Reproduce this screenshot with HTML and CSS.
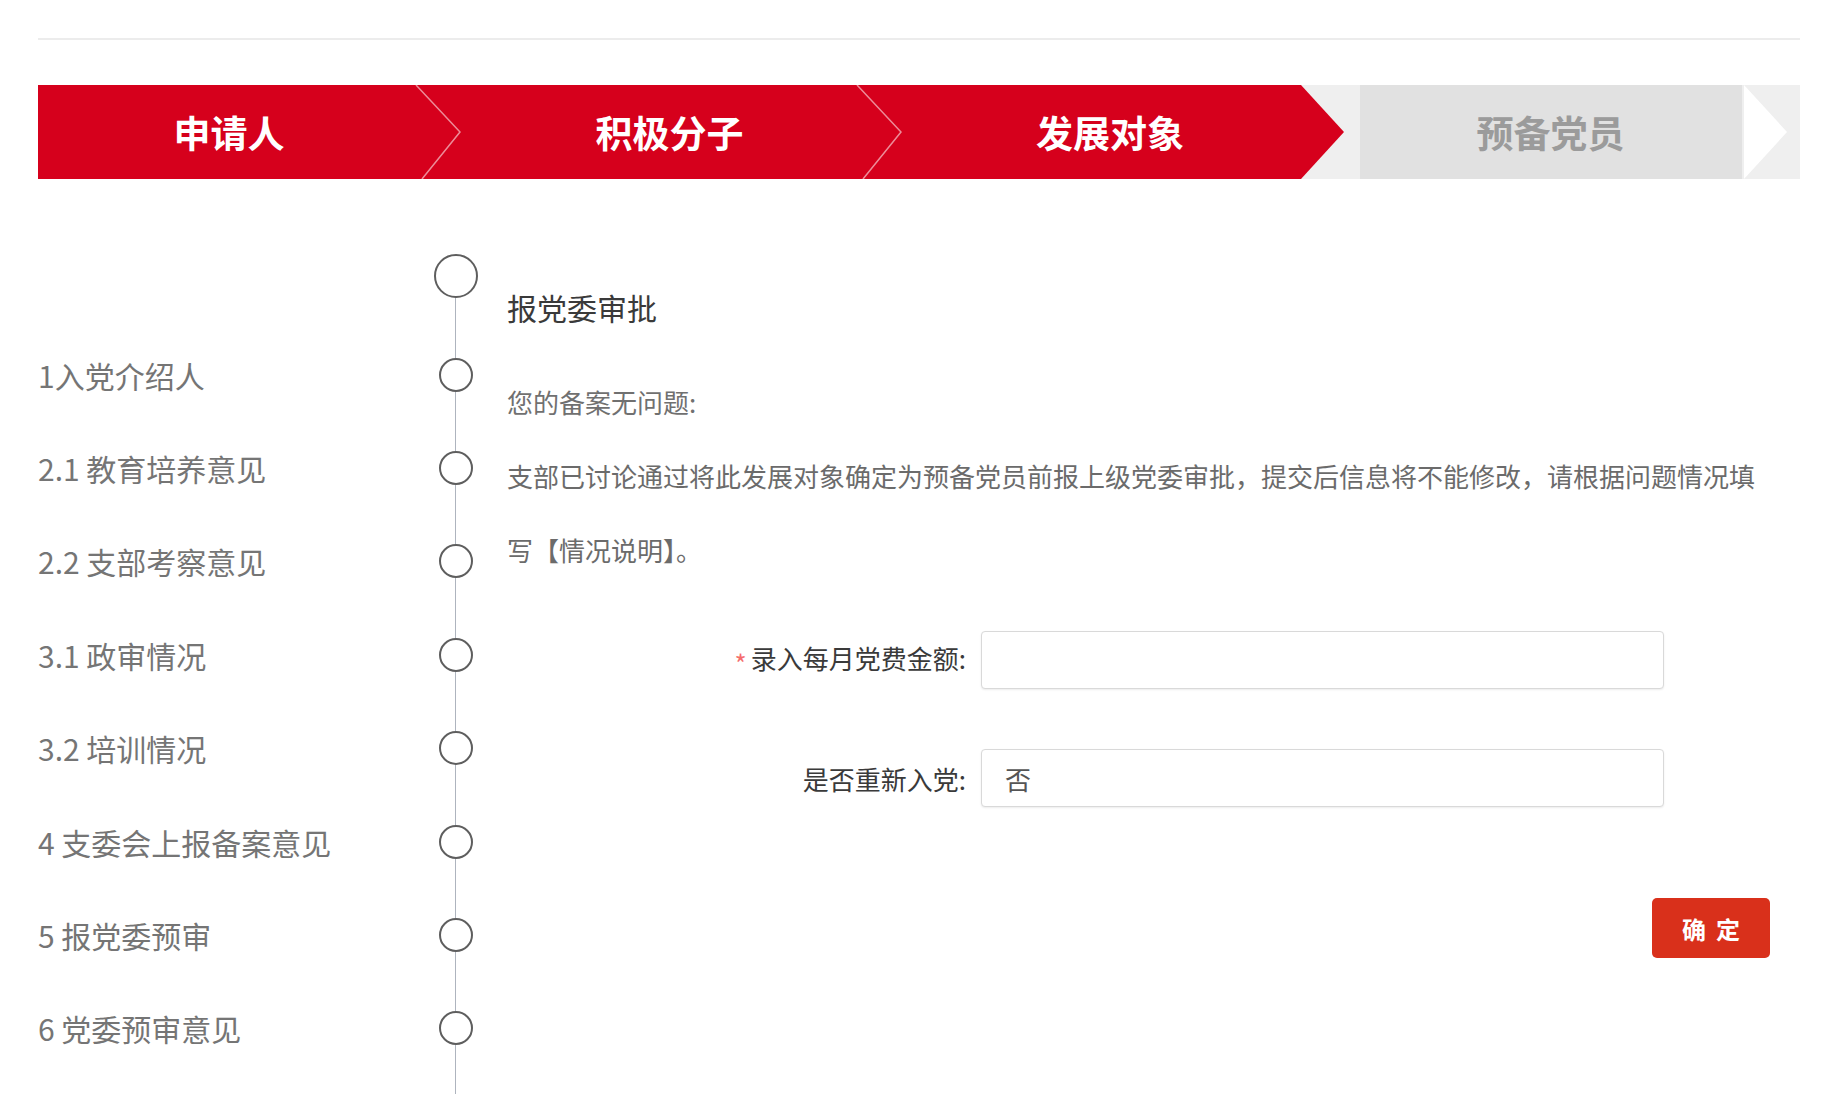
FILE: index.html
```html
<!DOCTYPE html>
<html>

<head>
  <meta charset="utf-8">
  <title>报党委审批</title>
  <link rel="stylesheet" href="styles.css">
</head>

<body>
  <div class="page">
    <div class="divider"></div>

    <!-- progress steps -->
    <div class="steps">
      <div class="step done">
        <span class="step-name">申请人</span>
        <svg class="step-arrow" viewBox="0 0 46 94"><polyline points="-4,0 40,47 2,94"></polyline></svg>
      </div>
      <div class="step done">
        <span class="step-name">积极分子</span>
        <svg class="step-arrow" viewBox="0 0 46 94"><polyline points="-4,0 40,47 2,94"></polyline></svg>
      </div>
      <div class="step current">
        <span class="step-name">发展对象</span>
        <svg class="step-arrow" viewBox="0 0 46 94"><polygon points="0,0 43,47 0,94"></polygon></svg>
      </div>
      <div class="step todo">
        <span class="step-name">预备党员</span>
        <svg class="step-arrow" viewBox="0 0 46 94"><polygon points="2,0 45,47 2,94"></polygon></svg>
      </div>
    </div>

    <div class="main">
      <div class="timeline">
        <div class="node head"><span></span><span class="dot big"></span></div>
        <div class="node"><span class="node-label">1入党介绍人</span><span class="dot"></span></div>
        <div class="node"><span class="node-label">2.1 教育培养意见</span><span class="dot"></span></div>
        <div class="node"><span class="node-label">2.2 支部考察意见</span><span class="dot"></span></div>
        <div class="node"><span class="node-label">3.1 政审情况</span><span class="dot"></span></div>
        <div class="node"><span class="node-label">3.2 培训情况</span><span class="dot"></span></div>
        <div class="node"><span class="node-label">4 支委会上报备案意见</span><span class="dot"></span></div>
        <div class="node"><span class="node-label">5 报党委预审</span><span class="dot"></span></div>
        <div class="node"><span class="node-label">6 党委预审意见</span><span class="dot"></span></div>
      </div>

      <div class="content">
        <h2 class="title">报党委审批</h2>
        <p class="hint">您的备案无问题:</p>
        <p class="desc">支部已讨论通过将此发展对象确定为预备党员前报上级党委审批，提交后信息将不能修改，请根据问题情况填写【情况说明】。</p>

        <div class="form-row">
          <label class="form-label"><span class="required">*</span>录入每月党费金额:</label>
          <input class="form-input" type="text" name="fee">
        </div>
        <div class="form-row">
          <label class="form-label">是否重新入党:</label>
          <input class="form-input" type="text" name="rejoin" value="否" readonly>
        </div>

        <div class="actions">
          <button class="btn-confirm">确定</button>
        </div>
      </div>
    </div>
  </div>
</body>

</html>
```

FILE: styles.css
```css
body {
  margin: 0;
  background: #fff;
  font-family: "Noto Sans CJK SC", "Noto Sans", sans-serif;
  color: #333;
}

.page {
  padding: 38px 43px 0 38px;
}

.divider {
  height: 2px;
  background: #ececec;
}

/* steps bar */
.steps {
  display: flex;
  height: 94px;
  margin-top: 45px;
  background: #efefef;
}

.step {
  flex: 1;
  display: flex;
}

.step-name {
  flex-shrink: 0;
  width: 382px;
  display: flex;
  align-items: center;
  justify-content: center;
  font-size: 37px;
  font-weight: 700;
  color: #fff;
}

.step-arrow {
  width: 46px;
  height: 94px;
  overflow: visible;
}

.step.done {
  background: #d6001c;
}

.step.done polyline {
  fill: none;
  stroke: rgba(255, 255, 255, 0.55);
  stroke-width: 1.5;
}

.step.current .step-name {
  background: #d6001c;
}

.step.current polygon {
  fill: #d6001c;
}

.step.todo .step-name {
  background: #e1e1e1;
  color: #9b9b9b;
}

.step.todo polygon {
  fill: #fff;
}

/* timeline + content */
.main {
  display: flex;
  padding-top: 75px;
}

.timeline {
  position: relative;
  width: 440px;
  flex-shrink: 0;
  padding-bottom: 19px;
}

.timeline::before {
  content: "";
  position: absolute;
  left: 417px;
  top: 22px;
  bottom: 0;
  width: 1px;
  background: #aeb4be;
}

.node {
  position: relative;
  display: grid;
  grid-template-columns: 1fr 44px;
  align-items: center;
  height: 93.4px;
}

.node.head {
  height: 74px;
  align-items: start;
}

.node-label {
  font-size: 30px;
  color: #757575;
  white-space: nowrap;
}

.dot {
  justify-self: center;
  width: 34px;
  height: 34px;
  box-sizing: border-box;
  border: 2px solid #5e5e5e;
  border-radius: 50%;
  background: #fff;
}

.dot.big {
  width: 44px;
  height: 44px;
}

.content {
  width: 1263px;
  margin-left: 29px;
  padding-top: 33px;
}

.title {
  margin: 0;
  font-size: 30px;
  font-weight: 400;
  line-height: 40px;
  color: #3a3a3a;
}

.hint {
  margin: 55px 0 0;
  font-size: 26px;
  line-height: 40px;
  color: #707070;
}

.desc {
  margin: 17px 0 0;
  font-size: 26px;
  line-height: 74px;
  color: #6b6b6b;
}

.form-row {
  display: flex;
  align-items: center;
  gap: 15px;
  margin-top: 44px;
}

.form-row + .form-row {
  margin-top: 60px;
}

.form-label {
  width: 459px;
  text-align: right;
  font-size: 26px;
  color: #3a3a3a;
}

.required {
  color: #f56c6c;
  font-size: 26px;
  margin-right: 4px;
  vertical-align: middle;
}

.form-input {
  width: 683px;
  height: 58px;
  box-sizing: border-box;
  padding: 0 23px;
  border: 1px solid #d9d9d9;
  border-radius: 4px;
  box-shadow: 0 1px 2px rgba(0, 0, 0, 0.08);
  font-family: inherit;
  font-size: 26px;
  color: #555;
  outline: none;
}

.actions {
  display: flex;
  justify-content: flex-end;
  margin-top: 91px;
}

.btn-confirm {
  width: 118px;
  height: 60px;
  border: none;
  border-radius: 5px;
  background: #d9301b;
  color: #fff;
  font-family: inherit;
  font-size: 24px;
  font-weight: 700;
  letter-spacing: 10px;
  text-indent: 10px;
  cursor: pointer;
}
```
